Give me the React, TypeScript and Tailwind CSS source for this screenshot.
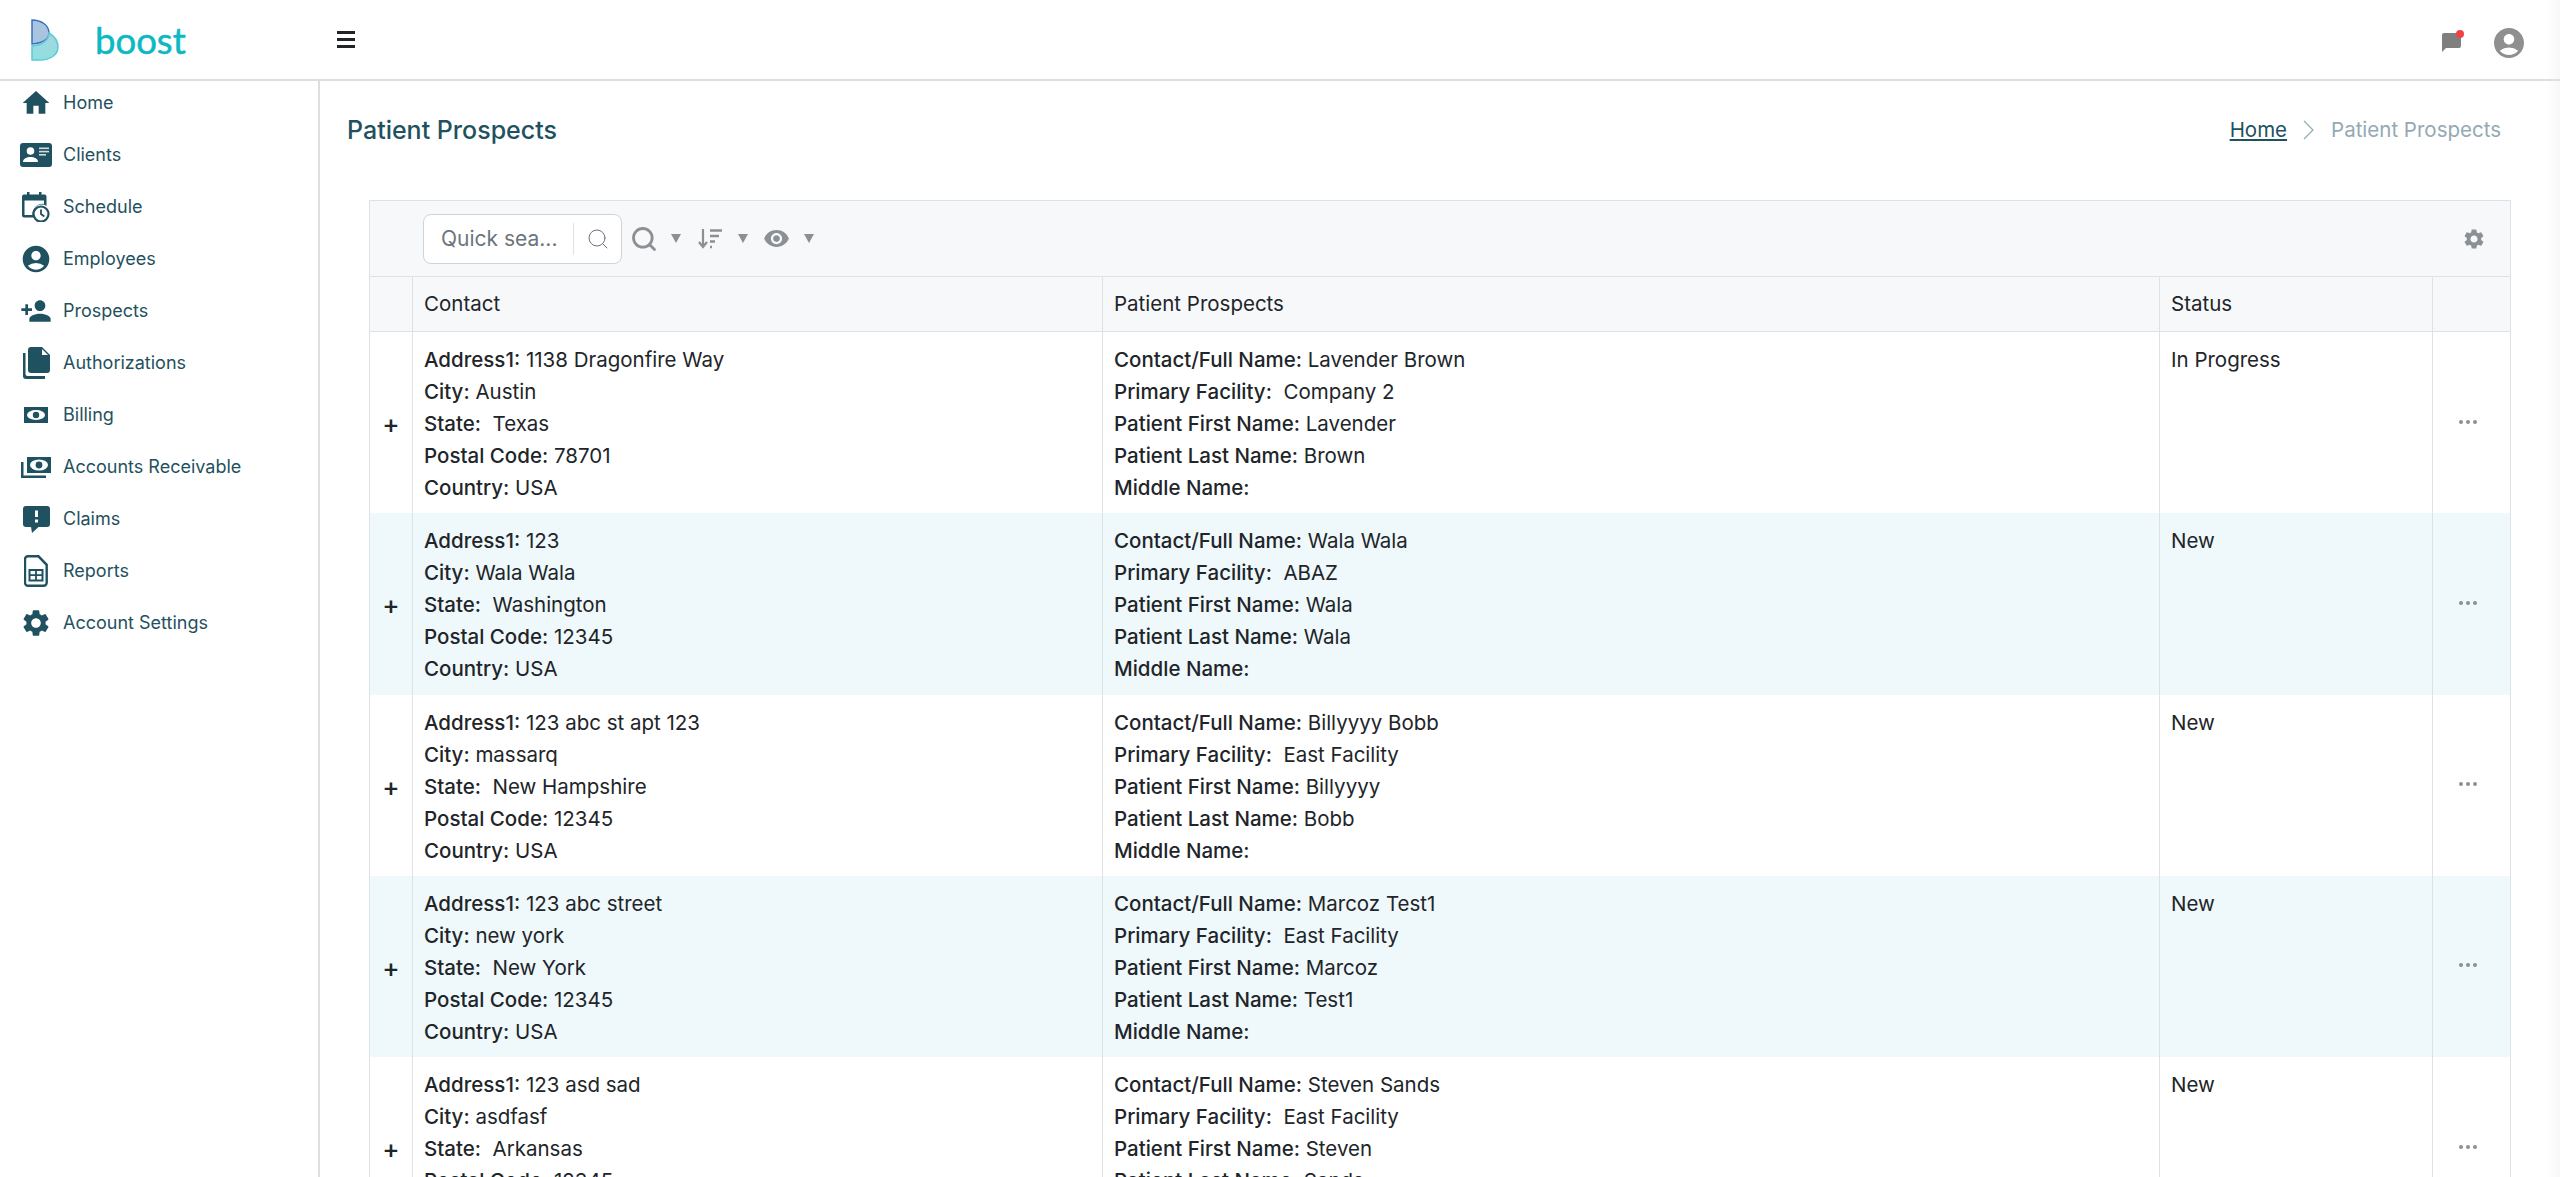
import { Search } from "lucide-react";
import {
  MdHome,
  MdAccountCircle,
  MdPersonAdd,
  MdSettings,
  MdVisibility,
} from "react-icons/md";

const ClientsIcon = () => (
  <svg width="32" height="24" viewBox="0 0 32 24">
    <rect width="32" height="24" rx="3" fill="currentColor" />
    <circle cx="10.5" cy="8" r="3.8" fill="#fff" />
    <path d="M3 19c0-3.4 3.6-5 7.500-5s7.500 1.600 7.500 5z" fill="#fff" />
    <rect x="19" y="4.500" width="10" height="1.600" fill="#fff" opacity="0.8" />
    <rect x="19" y="7.800" width="10" height="1.600" fill="#fff" opacity="0.8" />
    <rect x="19" y="11" width="7" height="1.600" fill="#fff" opacity="0.8" />
  </svg>
);

const ScheduleIcon = () => (
  <svg width="28" height="30" viewBox="0 0 28 30">
    <rect x="5" y="0" width="2.500" height="4" fill="currentColor" />
    <rect x="17" y="0" width="2.500" height="4" fill="currentColor" />
    <path
      d="M2 2.500h20.500a2 2 0 0 1 2 2V14a8.500 8.500 0 0 0-12 11.500H2a2 2 0 0 1-2-2v-19a2 2 0 0 1 2-2zM2.500 8.500V23h8a10 10 0 0 1 11.500-11V8.500z"
      fill="currentColor"
      fillRule="evenodd"
    />
    <circle cx="19" cy="22" r="7.500" fill="#fff" stroke="currentColor" strokeWidth="2.200" />
    <path d="M19 17.500V22l3.300 2.500" fill="none" stroke="currentColor" strokeWidth="1.800" />
  </svg>
);

const AuthorizationsIcon = () => (
  <svg width="27" height="32" viewBox="0 0 27 32">
    <path d="M8 0h11l8 8v15a3 3 0 0 1-3 3H8a3 3 0 0 1-3-3V3a3 3 0 0 1 3-3z" fill="currentColor" />
    <path d="M19 2l6 6h-6z" fill="#fff" />
    <path d="M0 6h2.500v21a2 2 0 0 0 2 2H22v3H3a3 3 0 0 1-3-3z" fill="currentColor" />
  </svg>
);

const BillingIcon = () => (
  <svg width="24" height="16" viewBox="0 0 24 16">
    <rect width="24" height="16" fill="currentColor" />
    <ellipse cx="12" cy="8" rx="9" ry="5" fill="#fff" />
    <circle cx="12" cy="8" r="3.200" fill="currentColor" />
  </svg>
);

const ReceivableIcon = () => (
  <svg width="30" height="21" viewBox="0 0 30 21">
    <rect x="6" y="0" width="24" height="16" fill="currentColor" />
    <ellipse cx="18" cy="8" rx="9" ry="5.500" fill="#fff" />
    <circle cx="18" cy="8" r="3.400" fill="currentColor" />
    <path d="M0 5h2.500v13.500H25V21H0z" fill="currentColor" />
  </svg>
);

const ClaimsIcon = () => (
  <svg width="27" height="27" viewBox="0 0 27 27">
    <path
      d="M3 0h21a3 3 0 0 1 3 3v15a3 3 0 0 1-3 3H15.500L9 27l-1-6H3a3 3 0 0 1-3-3V3a3 3 0 0 1 3-3z"
      fill="currentColor"
    />
    <rect x="12" y="4.500" width="3" height="6.500" fill="#fff" />
    <rect x="12" y="13.500" width="3" height="3" fill="#fff" />
  </svg>
);

const ReportsIcon = () => (
  <svg width="24" height="32" viewBox="0 0 24 32">
    <path
      d="M4 1.300h10.500l8.200 8.500v18a3 3 0 0 1-3 3H4a3 3 0 0 1-3-3V4.300a3 3 0 0 1 3-3z"
      fill="none"
      stroke="currentColor"
      strokeWidth="2.400"
    />
    <rect x="5.500" y="15" width="13" height="10.500" fill="none" stroke="currentColor" strokeWidth="2" />
    <path d="M12 15v10.500M5.500 20.200h13" stroke="currentColor" strokeWidth="1.800" />
  </svg>
);

const Logo = () => (
  <svg width="28" height="42" viewBox="0 0 28 42">
    <defs>
      <linearGradient id="lobe" x1="0" y1="0" x2="0" y2="1">
        <stop offset="0" stopColor="#a8d4de" />
        <stop offset="1" stopColor="#8fe0e0" />
      </linearGradient>
    </defs>
    <path
      d="M1 1c9 0 17 5 17 13 0 6-6 10-17 11z"
      fill="#a9c4de"
      stroke="#3c6fc0"
      strokeWidth="1.500"
    />
    <path
      d="M1 27c10-.5 17-6 17-13 5 3 9 8 9 14 0 8-8 13-18 13H1z"
      fill="url(#lobe)"
      stroke="#5cc9d6"
      strokeWidth="1.500"
    />
  </svg>
);

const Caret = () => (
  <svg width="10" height="9" viewBox="0 0 10 9" className="text-[#8b9095]">
    <path d="M0 0h10L5 9z" fill="currentColor" />
  </svg>
);

const SortIcon = () => (
  <svg width="24" height="20" viewBox="0 0 24 20" className="text-[#8b9095]">
    <path d="M5 0v17M1 13l4 5 4-5" fill="none" stroke="currentColor" strokeWidth="2.200" />
    <path d="M12 1.500h12M12 7h9M12 12.500h5M12 18h2" stroke="currentColor" strokeWidth="2.400" />
  </svg>
);

const navItems = [
  { label: "Home", icon: <MdHome size={32} /> },
  { label: "Clients", icon: <ClientsIcon /> },
  { label: "Schedule", icon: <ScheduleIcon /> },
  { label: "Employees", icon: <MdAccountCircle size={32} /> },
  { label: "Prospects", icon: <MdPersonAdd size={32} /> },
  { label: "Authorizations", icon: <AuthorizationsIcon /> },
  { label: "Billing", icon: <BillingIcon /> },
  { label: "Accounts Receivable", icon: <ReceivableIcon /> },
  { label: "Claims", icon: <ClaimsIcon /> },
  { label: "Reports", icon: <ReportsIcon /> },
  { label: "Account Settings", icon: <MdSettings size={32} /> },
];

const prospects = [
  { address: "1138 Dragonfire Way", city: "Austin", state: "Texas", zip: "78701", name: "Lavender Brown", facility: "Company 2", first: "Lavender", last: "Brown", status: "In Progress" },
  { address: "123", city: "Wala Wala", state: "Washington", zip: "12345", name: "Wala Wala", facility: "ABAZ", first: "Wala", last: "Wala", status: "New" },
  { address: "123 abc st apt 123", city: "massarq", state: "New Hampshire", zip: "12345", name: "Billyyyy Bobb", facility: "East Facility", first: "Billyyyy", last: "Bobb", status: "New" },
  { address: "123 abc street", city: "new york", state: "New York", zip: "12345", name: "Marcoz Test1", facility: "East Facility", first: "Marcoz", last: "Test1", status: "New" },
  { address: "123 asd sad", city: "asdfasf", state: "Arkansas", zip: "12345", name: "Steven Sands", facility: "East Facility", first: "Steven", last: "Sands", status: "New" },
];

const Field = ({ label, value }: { label: string; value: string }) => (
  <div className="h-[32px] whitespace-pre">
    <span className="font-medium">{label}</span> {value}
  </div>
);

const Strip = () => (
  <div className="w-[14px] shrink-0 bg-gradient-to-r from-white to-[#f7f7f7]" />
);

const App = () => {
  return (
    <div className="h-screen w-full overflow-hidden flex flex-col bg-white text-[20.5px] leading-[32px] text-[#212529] font-['Inter',sans-serif]">
      <header className="h-[81px] shrink-0 flex border-b-2 border-[#dcdee0]">
        <div className="flex-1 flex items-center">
          <div className="w-[337px] flex items-center pl-[31px]">
            <Logo />
            <span className="ml-[36px] mt-[2px] text-[36.5px] leading-none text-[#0cb8c4] font-['Lato',sans-serif] [-webkit-text-stroke:0.5px_#0cb8c4]">
              boost
            </span>
          </div>
          <div className="flex flex-col gap-[4.5px]">
            <div className="w-[18px] h-[2.5px] bg-[#212529]" />
            <div className="w-[18px] h-[2.5px] bg-[#212529]" />
            <div className="w-[18px] h-[2.5px] bg-[#212529]" />
          </div>
          <div className="ml-auto mt-[6px] flex items-center pr-[19px] gap-[30px] text-[#8f8f8f]">
            <div className="relative">
              <svg width="19" height="19" viewBox="0 0 19 19" className="block">
                <path d="M2 0h15a2 2 0 0 1 2 2v11a2 2 0 0 1-2 2H4l-4 4V2a2 2 0 0 1 2-2z" fill="#7f7f7f" />
              </svg>
              <div className="absolute -top-[3px] -right-[3px] w-[8px] h-[8px] rounded-full bg-[#ef4444]" />
            </div>
            <MdAccountCircle size={36} />
          </div>
        </div>
        <Strip />
      </header>

      <div className="flex-1 flex min-h-0">
        <aside className="w-[320px] shrink-0 border-r-2 border-[#dcdee0] pt-[6px] flex flex-col gap-[20px] text-[18px] text-[#1f5160]">
          {navItems.map((item) => (
            <div key={item.label} className="h-[32px] flex items-center">
              <div className="w-[48px] ml-[12px] mr-[3px] h-[32px] flex items-center justify-center">
                {item.icon}
              </div>
              <span>{item.label}</span>
            </div>
          ))}
        </aside>

        <main className="flex-1 min-w-0 pl-[27px] pt-[24px]">
          <div className="flex items-center justify-between h-[50px] pr-[45px]">
            <h1 className="text-[25px] font-medium text-[#1f5160]">Patient Prospects</h1>
            <div className="flex items-center">
              <a className="underline text-[#1f5160]">Home</a>
              <svg width="12" height="20" viewBox="0 0 12 20" className="mx-[16px] text-[#94a9b4]">
                <path d="M1 1l9 9-9 9" fill="none" stroke="currentColor" strokeWidth="1.200" />
              </svg>
              <span className="text-[#94a9b4]">Patient Prospects</span>
            </div>
          </div>

          <div className="mt-[45px] ml-[22px] mr-[35px] border-x border-[#dee2e6]">
            <div className="h-[77px] flex items-center bg-[#f7f8fa] border-y border-[#dee2e6] pl-[53px] pr-[24px]">
              <div className="w-[199px] h-[50px] flex items-center rounded-[8px] border border-[#ced4da] bg-white">
                <span className="w-[149px] pl-[17px] text-[21px] text-[#6c757d]">Quick sea...</span>
                <div className="h-[32px] border-l border-[#dee2e6]" />
                <Search size={24} strokeWidth={1} className="ml-[12px] text-[#6b7280]" />
              </div>
              <Search size={28} strokeWidth={2.4} className="ml-[8px] text-[#8b9095]" />
              <div className="ml-[13px]"><Caret /></div>
              <div className="ml-[17px]"><SortIcon /></div>
              <div className="ml-[16px]"><Caret /></div>
              <MdVisibility size={27} className="ml-[15px] text-[#8b9095]" />
              <div className="ml-[14px]"><Caret /></div>
              <MdSettings size={24} className="ml-auto text-[#8b9095]" />
            </div>

            <div className="h-[55px] grid grid-cols-[42px_690px_1057px_273px_1fr] bg-[#f7f8fa] border-b border-[#dee2e6]">
              <div />
              <div className="border-l border-[#dee2e6] pl-[11px] flex items-center">Contact</div>
              <div className="border-l border-[#dee2e6] pl-[11px] flex items-center">Patient Prospects</div>
              <div className="border-l border-[#dee2e6] pl-[11px] flex items-center">Status</div>
              <div className="border-l border-[#dee2e6]" />
            </div>

            {prospects.map((p, i) => (
              <div
                key={p.name}
                className={`h-[181.25px] grid grid-cols-[42px_690px_1057px_273px_1fr] ${i % 2 === 1 ? "bg-[#eff8fb]" : "bg-white"}`}
              >
                <div className="flex items-center justify-center pt-[3px] text-[26px] font-medium">+</div>
                <div className="border-l border-[#dee2e6] pl-[11px] pt-[12px]">
                  <Field label="Address1:" value={p.address} />
                  <Field label="City:" value={p.city} />
                  <Field label="State:" value={` ${p.state}`} />
                  <Field label="Postal Code:" value={p.zip} />
                  <Field label="Country:" value="USA" />
                </div>
                <div className="border-l border-[#dee2e6] pl-[11px] pt-[12px]">
                  <Field label="Contact/Full Name:" value={p.name} />
                  <Field label="Primary Facility:" value={` ${p.facility}`} />
                  <Field label="Patient First Name:" value={p.first} />
                  <Field label="Patient Last Name:" value={p.last} />
                  <Field label="Middle Name:" value="" />
                </div>
                <div className="border-l border-[#dee2e6] pl-[11px] pt-[12px]">{p.status}</div>
                <div className="border-l border-[#dee2e6] flex items-center justify-center gap-[3px] pr-[8px] pb-[2px]">
                  <div className="w-[4px] h-[4px] rounded-full bg-[#8b9095]" />
                  <div className="w-[4px] h-[4px] rounded-full bg-[#8b9095]" />
                  <div className="w-[4px] h-[4px] rounded-full bg-[#8b9095]" />
                </div>
              </div>
            ))}
          </div>
        </main>
        <Strip />
      </div>
    </div>
  );
};

export default App;
